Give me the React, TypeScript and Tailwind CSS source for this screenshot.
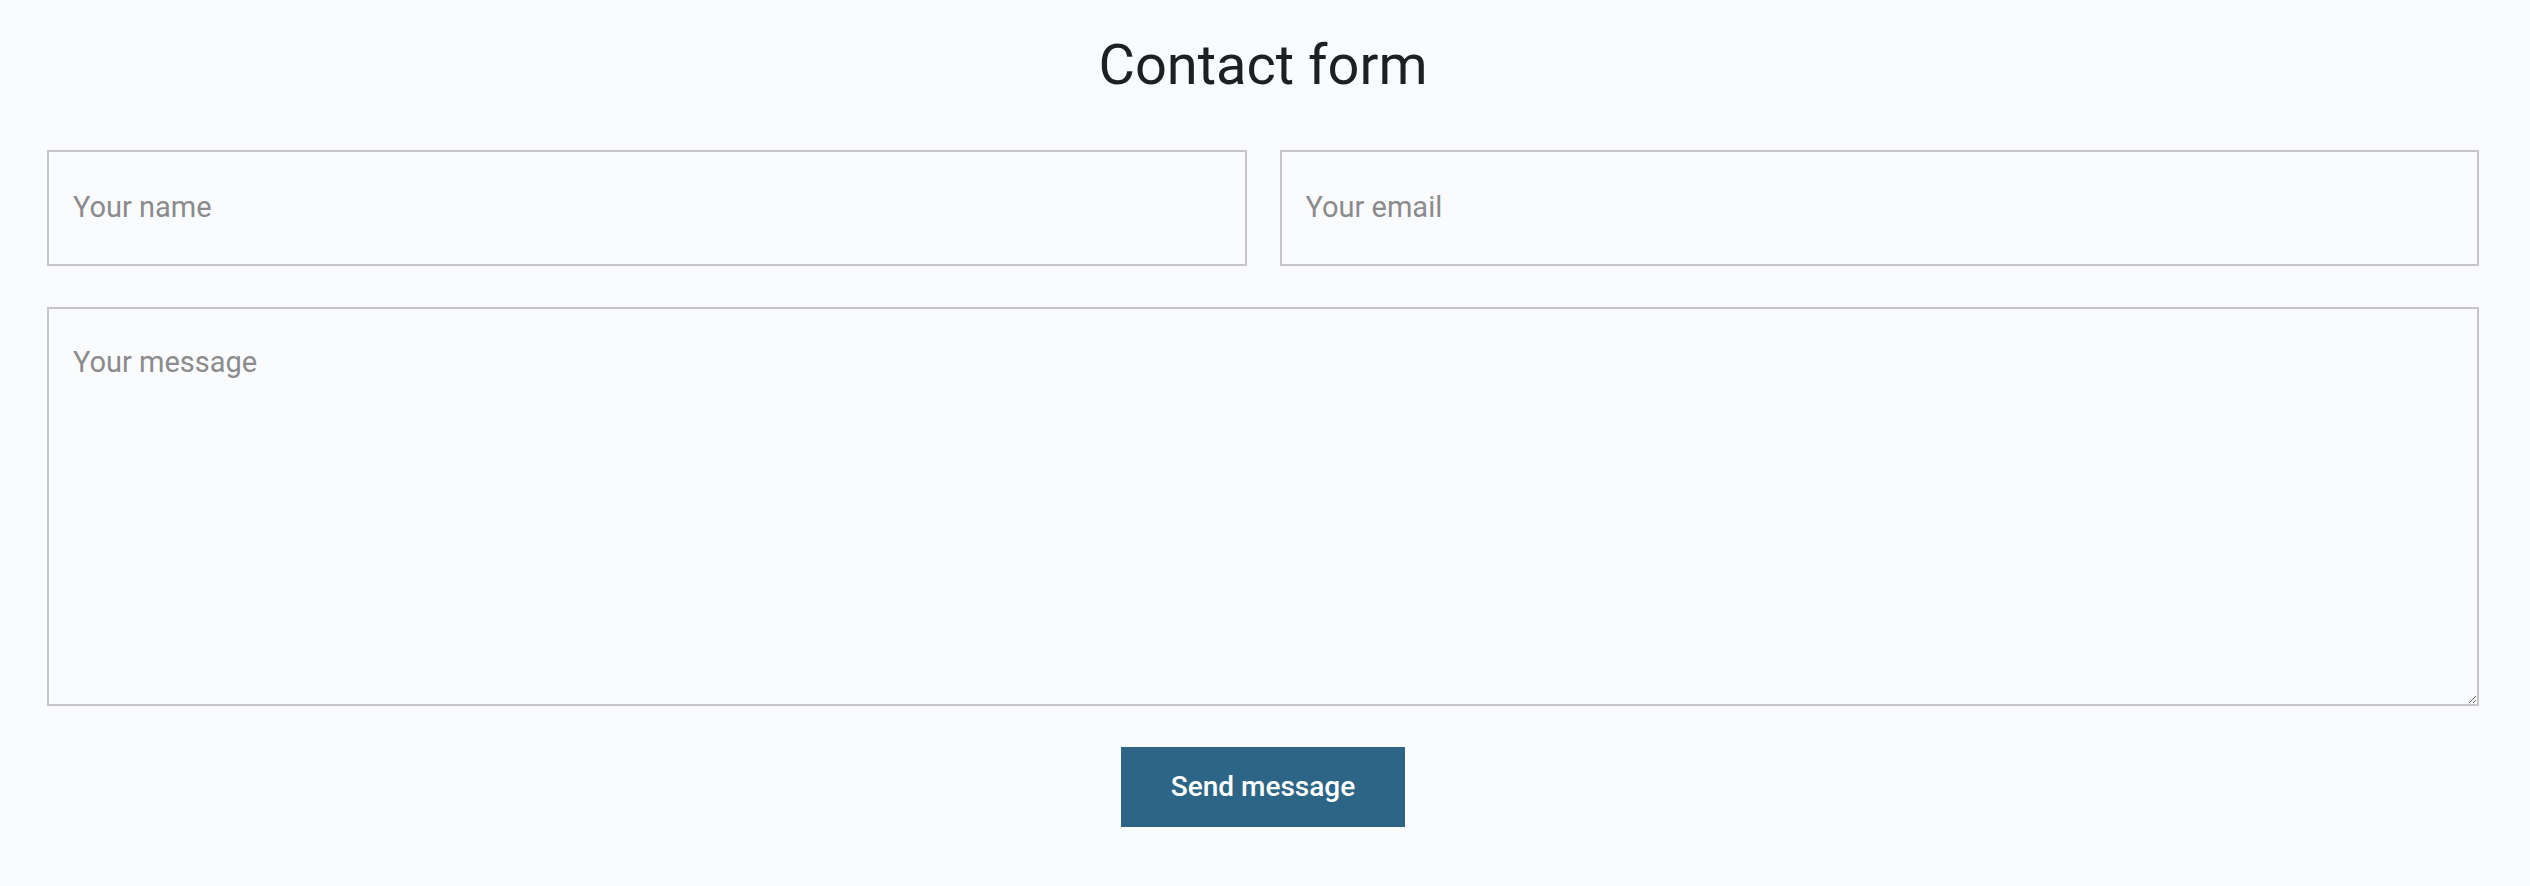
import React from 'react';

export default function App() {
  return (
    <div className="min-h-screen bg-[#fafbfd] font-['Roboto',sans-serif] pt-[32px] pb-[60px] pl-[47px] pr-[51px]">
      <h1 className="text-center text-[56px] leading-[67px] font-normal text-[#1e1f21] mb-[51px]">Contact form</h1>

      <form className="flex flex-col gap-[41px]" onSubmit={e => e.preventDefault()}>
        {/* name + email */}
        <div className="grid grid-cols-2 gap-[33px]">
          <input
            type="text"
            placeholder="Your name"
            className="h-[116px] w-full border-2 border-[#c6c6c8] bg-transparent px-[24px] pb-[2px] text-[29px] text-[#333] placeholder:text-[#8b8b8d] outline-none"
          />
          <input
            type="email"
            placeholder="Your email"
            className="h-[116px] w-full border-2 border-[#c6c6c8] bg-transparent px-[24px] pb-[2px] text-[29px] text-[#333] placeholder:text-[#8b8b8d] outline-none"
          />
        </div>

        <textarea
          placeholder="Your message"
          className="block h-[399px] w-full border-2 border-[#c6c6c8] bg-transparent px-[24px] pt-[32px] text-[29px] leading-[42px] text-[#333] placeholder:text-[#8b8b8d] outline-none"
        />

        <div className="flex justify-center">
          <button
            type="submit"
            className="h-[80px] w-[284px] bg-[#2c6585] text-[28px] font-medium text-white"
          >
            Send message
          </button>
        </div>
      </form>
    </div>
  );
}
